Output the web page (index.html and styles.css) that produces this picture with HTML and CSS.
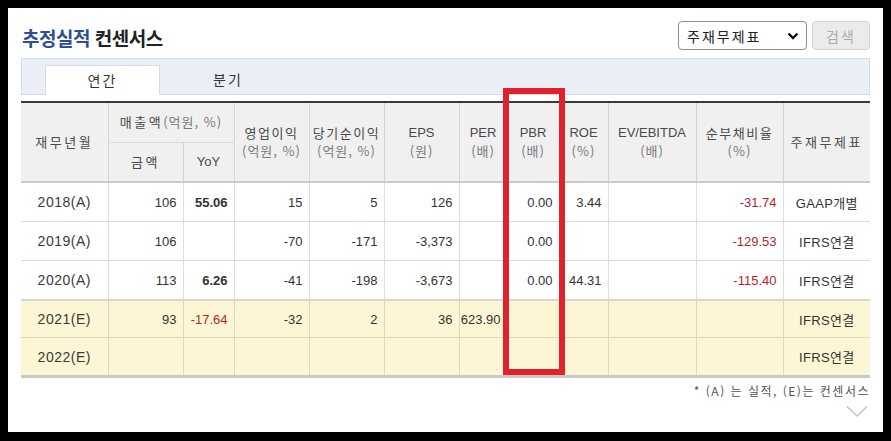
FILE: index.html
```html
<!DOCTYPE html>
<html lang="ko">
<head>
<meta charset="utf-8">
<title>추정실적 컨센서스</title>
<link rel="stylesheet" href="styles.css">
</head>
<body>
<div class="frame">
  <div class="top">
    <h2 class="title"><span class="blue">추정실적</span> 컨센서스</h2>
    <div class="controls">
      <div class="sel-wrap">
        <select class="sel"><option>주재무제표</option></select>
        <svg class="sel-chev" width="12" height="8" viewBox="0 0 12 8"><polyline points="1.5,1.5 6,6 10.5,1.5" fill="none" stroke="#111" stroke-width="2.4"/></svg>
      </div>
      <button class="btn" disabled>검색</button>
    </div>
  </div>
  <div class="tabs">
    <div class="tab active">연간</div>
    <div class="tab">분기</div>
  </div>
  <div class="table-wrap">
    <table class="grid">
      <colgroup>
        <col style="width:87px"><col style="width:75px"><col style="width:51px"><col style="width:75px"><col style="width:75px"><col style="width:75px"><col style="width:48px"><col style="width:52px"><col style="width:49px"><col style="width:88px"><col style="width:87px"><col style="width:87px">
      </colgroup>
      <thead>
        <tr class="h1">
          <th rowspan="2" class="ko">재무년월</th>
          <th colspan="2" class="grp"><span class="ko">매출액</span><span class="sub">(억원, %)</span></th>
          <th rowspan="2"><div class="ko2">영업이익</div><div class="sub">(억원, %)</div></th>
          <th rowspan="2"><div class="ko2">당기순이익</div><div class="sub">(억원, %)</div></th>
          <th rowspan="2"><div>EPS</div><div class="sub">(원)</div></th>
          <th rowspan="2"><div>PER</div><div class="sub">(배)</div></th>
          <th rowspan="2"><div>PBR</div><div class="sub">(배)</div></th>
          <th rowspan="2"><div>ROE</div><div class="sub">(%)</div></th>
          <th rowspan="2"><div>EV/EBITDA</div><div class="sub">(배)</div></th>
          <th rowspan="2"><div class="ko2">순부채비율</div><div class="sub">(%)</div></th>
          <th rowspan="2" class="ko">주재무제표</th>
        </tr>
        <tr class="h2">
          <th class="ko">금액</th>
          <th>YoY</th>
        </tr>
      </thead>
      <tbody>
        <tr>
          <td class="yr">2018(A)</td><td>106</td><td class="b">55.06</td><td>15</td><td>5</td><td>126</td><td></td><td>0.00</td><td>3.44</td><td></td><td class="neg">-31.74</td><td class="std">GAAP개별</td>
        </tr>
        <tr>
          <td class="yr">2019(A)</td><td>106</td><td></td><td>-70</td><td>-171</td><td>-3,373</td><td></td><td>0.00</td><td></td><td></td><td class="neg">-129.53</td><td class="std">IFRS연결</td>
        </tr>
        <tr>
          <td class="yr">2020(A)</td><td>113</td><td class="b">6.26</td><td>-41</td><td>-198</td><td>-3,673</td><td></td><td>0.00</td><td>44.31</td><td></td><td class="neg">-115.40</td><td class="std">IFRS연결</td>
        </tr>
        <tr class="est first-est">
          <td class="yr">2021(E)</td><td>93</td><td class="neg">-17.64</td><td>-32</td><td>2</td><td>36</td><td>623.90</td><td></td><td></td><td></td><td></td><td class="std">IFRS연결</td>
        </tr>
        <tr class="est">
          <td class="yr">2022(E)</td><td></td><td></td><td></td><td></td><td></td><td></td><td></td><td></td><td></td><td></td><td class="std">IFRS연결</td>
        </tr>
      </tbody>
    </table>
    <div class="highlight"></div>
  </div>
  <div class="note">* (A) 는 실적, (E)는 컨센서스</div>
  <div class="more">
    <svg width="22" height="13" viewBox="0 0 22 13"><polyline points="1,1.5 11,11 21,1.5" fill="none" stroke="#c4c4c4" stroke-width="1.6"/></svg>
  </div>
</div>
</body>
</html>
```

FILE: styles.css
```css
html, body {
  margin: 0;
  padding: 0;
  background: #000;
}
body {
  font-family: "Liberation Sans", "Noto Sans CJK KR", sans-serif;
  color: #333;
}
.frame {
  margin: 8px 8px 9px 8px;
  height: 424px;
  background: #fff;
  padding: 13px 13px 0 13px;
  box-sizing: border-box;
}
.top {
  display: flex;
  justify-content: space-between;
  align-items: flex-start;
  height: 29px;
}
.title {
  margin: 2px 0 0 1px;
  font-family: "Noto Sans CJK KR", sans-serif;
  font-size: 19px;
  line-height: 29px;
  font-weight: bold;
  color: #222;
  letter-spacing: -0.5px;
}
.title .blue {
  color: #2d4f94;
}
.controls {
  display: flex;
  gap: 5px;
}
.sel-wrap {
  position: relative;
  width: 129px;
  height: 29px;
}
.sel {
  appearance: none;
  -webkit-appearance: none;
  width: 129px;
  height: 29px;
  box-sizing: border-box;
  border: 1px solid #8d8d8d;
  border-radius: 4px;
  background: #fff;
  padding: 0 0 0 8px;
  font-family: "Noto Sans CJK KR", sans-serif;
  font-size: 14px;
  color: #222;
  letter-spacing: 2px;
}
.sel-chev {
  position: absolute;
  right: 8px;
  top: 11px;
  pointer-events: none;
}
.btn {
  width: 58px;
  height: 29px;
  box-sizing: border-box;
  border: 1px solid #d3d3d3;
  border-radius: 4px;
  background: #ebebeb;
  color: #a9a9a9;
  font-family: "Noto Sans CJK KR", sans-serif;
  font-size: 14px;
  letter-spacing: 2px;
  padding: 0;
}
.tabs {
  margin-top: 8px;
  height: 37px;
  box-sizing: border-box;
  background: #e9eef7;
  border: 1px solid #d2dbe9;
  padding: 6px 0 0 23px;
  display: flex;
}
.tab {
  width: 136px;
  height: 29px;
  box-sizing: border-box;
  text-align: center;
  font-family: "Noto Sans CJK KR", sans-serif;
  font-size: 14px;
  line-height: 29px;
  color: #333;
  letter-spacing: 2px;
}
.tab.active {
  width: 115px;
  height: 30px;
  background: #fff;
  border: 1px solid #d2dbe9;
  border-bottom: none;
  position: relative;
  z-index: 1;
}
.table-wrap {
  position: relative;
  margin-top: 6px;
}
.grid {
  width: 849px;
  table-layout: fixed;
  border-collapse: collapse;
  border-top: 2px solid #3a3a3a;
  border-bottom: 3px solid #c8c8c8;
  font-size: 13px;
}
.grid th {
  background: #f0f0f0;
  font-weight: normal;
  color: #4a4a4a;
  text-align: center;
  border-left: 1px solid #d4d4d4;
  border-right: 1px solid #d4d4d4;
  padding: 0;
  line-height: 18px;
  white-space: nowrap;
}
.grid th:first-child { border-left: none; }
.grid tr.h1 th:last-child { border-right: none; }
.grid tr.h1 { height: 40px; }
.grid tr.h2 { height: 40px; }
.grid tr.h2 th { border-bottom: 2px solid #cbcbcb; }
.grid tr.h1 th[rowspan] { border-bottom: 2px solid #cbcbcb; }
.grid th.grp { border-bottom: 1px solid #dadada; }
.ko {
  font-family: "Noto Sans CJK KR", sans-serif;
  letter-spacing: 2.5px;
}
.ko2 {
  font-family: "Noto Sans CJK KR", sans-serif;
  letter-spacing: 1.5px;
}
.sub {
  font-family: "Noto Sans CJK KR", sans-serif;
  color: #7a7a7a;
  letter-spacing: 1px;
}
.grid td {
  height: 38px;
  padding: 0 6px 0 0;
  text-align: right;
  border: 1px solid #dcdcdc;
  border-top: none;
  color: #333;
  white-space: nowrap;
}
.grid td:first-child { border-left: none; }
.grid td:last-child { border-right: none; }
.grid td.yr {
  text-align: center;
  padding: 0;
  font-size: 14px;
  letter-spacing: 0.5px;
  color: #3a3a3a;
}
.grid td.std {
  text-align: center;
  padding: 0;
  font-family: "Liberation Sans", "Noto Sans CJK KR", sans-serif;
  letter-spacing: 0.3px;
}
.grid td.b { font-weight: bold; }
.grid td.neg { color: #b5262c; }
.grid tr.est td {
  background: #fcf6d4;
  border-color: #ddd8bc;
}
.grid tr.first-est td { border-top: 2px solid #d6d6d6; height: 36px; }
.grid tr.est + tr.est td { height: 37px; }
.grid tr.est td:first-child { border-left: none; }
.grid tr.est td:last-child { border-right: none; }
.highlight {
  position: absolute;
  left: 482px;
  top: -13px;
  width: 62px;
  height: 287px;
  box-sizing: border-box;
  border: 6px solid #e1212b;
  pointer-events: none;
}
.note {
  margin-top: 5px;
  text-align: right;
  font-family: "Noto Sans CJK KR", sans-serif;
  font-size: 12px;
  line-height: 15px;
  color: #555;
  letter-spacing: 1.5px;
}
.more {
  display: flex;
  justify-content: flex-end;
  padding-right: 2px;
  margin-top: 7px;
}
.more svg { display: block; }
```
